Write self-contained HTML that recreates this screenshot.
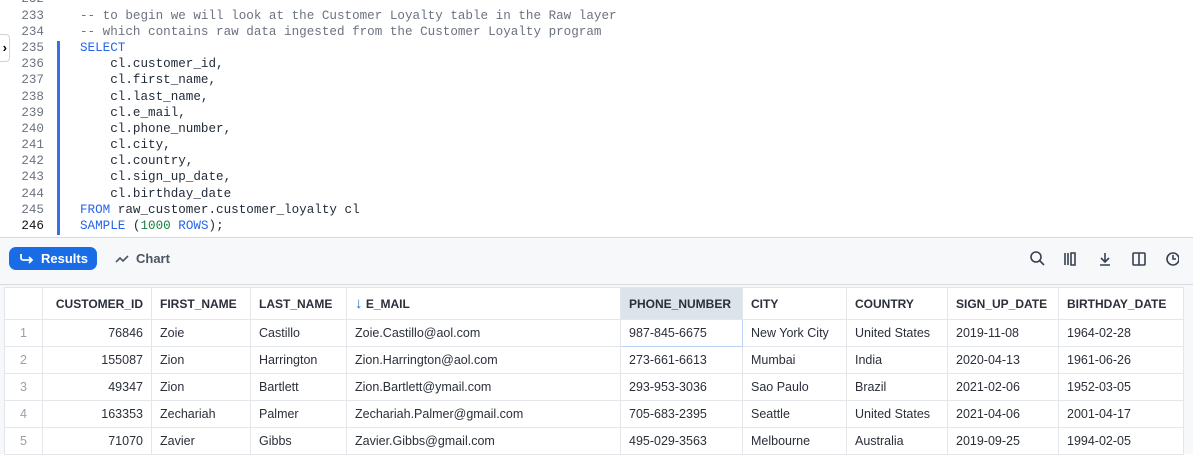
<!DOCTYPE html><html><head><style>
*{margin:0;padding:0;box-sizing:border-box}
body{width:1193px;height:454px;overflow:hidden;background:#fff;font-family:"Liberation Sans",sans-serif;position:relative}
.code{position:absolute;left:0;top:0;width:1193px;height:238px;background:#fff;border-bottom:1px solid #d5d9e0}
.ln{position:absolute;left:0;width:44px;text-align:right;font:12.6px "Liberation Mono",monospace;color:#6b7280}
.cl{position:absolute;left:80px;font:12.6px "Liberation Mono",monospace;color:#1f2937;white-space:pre}
.cm{color:#6b7280}.kw{color:#2563eb}.nm{color:#15803d}
.bar{position:absolute;left:57px;top:41px;width:3px;height:194px;background:#3b6fe8}
.tog{position:absolute;left:-6px;top:34px;width:16px;height:28px;border:1px solid #cfd4dc;border-radius:4px;background:#fff;font-size:13px;font-weight:bold;text-align:right;line-height:26px;padding-right:2px}
.tb{position:absolute;left:0;top:238px;width:1193px;height:47px;background:#f7f8fa;border-bottom:1px solid #d5d9e0}
.btn{position:absolute;left:9px;top:9px;width:88px;height:23px;background:#1a6ce6;border-radius:7px;color:#fff;font-size:13px;font-weight:bold;line-height:23px;padding-left:32px}
.chart{position:absolute;left:136px;top:13px;font-size:13px;color:#4b5563;font-weight:bold}
.tbl{position:absolute;left:0;top:285px;width:1193px;height:169px;background:#f7f8fa}
table{position:absolute;left:4px;top:2px;border-collapse:collapse;table-layout:fixed;width:1179px;background:#fff;font-size:12.5px;color:#2a2f3a}
td,th{border:1px solid #e3e6eb;height:27px;padding:0 8px;white-space:nowrap;overflow:hidden;text-align:left;font-weight:normal}
th{height:32px;font-weight:bold;font-size:12px;color:#2a2f3a}
td.n{color:#9aa0aa;text-align:center;padding:0}
td.r{text-align:right}
</style></head><body>
<div class="code">
<div class="ln" style="top:-8px">232</div>
<div class="ln" style="top:9px">233</div><div class="cl cm" style="top:9px">-- to begin we will look at the Customer Loyalty table in the Raw layer</div>
<div class="ln" style="top:25px">234</div><div class="cl cm" style="top:25px">-- which contains raw data ingested from the Customer Loyalty program</div>
<div class="ln" style="top:41px">235</div><div class="cl kw" style="top:41px">SELECT</div>
<div class="ln" style="top:57px">236</div><div class="cl" style="top:57px">    cl.customer_id,</div>
<div class="ln" style="top:73px">237</div><div class="cl" style="top:73px">    cl.first_name,</div>
<div class="ln" style="top:90px">238</div><div class="cl" style="top:90px">    cl.last_name,</div>
<div class="ln" style="top:106px">239</div><div class="cl" style="top:106px">    cl.e_mail,</div>
<div class="ln" style="top:122px">240</div><div class="cl" style="top:122px">    cl.phone_number,</div>
<div class="ln" style="top:138px">241</div><div class="cl" style="top:138px">    cl.city,</div>
<div class="ln" style="top:154px">242</div><div class="cl" style="top:154px">    cl.country,</div>
<div class="ln" style="top:170px">243</div><div class="cl" style="top:170px">    cl.sign_up_date,</div>
<div class="ln" style="top:187px">244</div><div class="cl" style="top:187px">    cl.birthday_date</div>
<div class="ln" style="top:203px">245</div><div class="cl" style="top:203px"><span class="kw">FROM</span> raw_customer.customer_loyalty cl</div>
<div class="ln" style="top:219px;color:#111">246</div><div class="cl" style="top:219px"><span class="kw">SAMPLE</span> (<span class="nm">1000</span> <span class="kw">ROWS</span>);</div>
<div class="bar"></div>
<div class="tog">›</div>
</div>
<div class="tb">
<div class="btn"><svg style="position:absolute;left:11px;top:6px" width="14" height="12" viewBox="0 0 14 12" fill="none" stroke="#fff" stroke-width="1.8"><path d="M1 1v4a2 2 0 0 0 2 2h9M9 4l3 3-3 3"/></svg>Results</div>
<svg style="position:absolute;left:115px;top:16px" width="14" height="10" viewBox="0 0 14 10" fill="none" stroke="#4b5563" stroke-width="1.6"><path d="M1 8l4-4 3 3 5-5"/></svg>
<div class="chart">Chart</div>
<svg style="position:absolute;left:1029px;top:12px" width="150" height="18" viewBox="0 0 150 18" fill="none" stroke="#374151" stroke-width="1.6">
<circle cx="7" cy="7" r="5"/><path d="M11 11l4 4"/>
<path d="M36 3v12M39 3v12M42 3h4v12h-4z"/>
<path d="M76 3v8M72 8l4 4 4-4M71 15h10"/>
<rect x="104" y="3" width="12" height="12" rx="1"/><path d="M110 3v12"/>
<circle cx="144" cy="9" r="6"/><path d="M144 5v4h3"/>
</svg>
</div>
<div class="tbl">
<table>
<colgroup><col style="width:38px"><col style="width:109px"><col style="width:99px"><col style="width:96px"><col style="width:274px"><col style="width:122px"><col style="width:104px"><col style="width:101px"><col style="width:111px"><col style="width:125px"></colgroup>
<tr><th></th><th style="text-align:right">CUSTOMER_ID</th><th>FIRST_NAME</th><th>LAST_NAME</th><th><span style="color:#1a6ce6;font-size:15px">↓</span> E_MAIL</th><th style="background:#dde3eb">PHONE_NUMBER</th><th>CITY</th><th>COUNTRY</th><th>SIGN_UP_DATE</th><th>BIRTHDAY_DATE</th></tr>
<tr><td class="n">1</td><td class="r">76846</td><td>Zoie</td><td>Castillo</td><td>Zoie.Castillo@aol.com</td><td style="border:1px solid #bcd3f5">987-845-6675</td><td>New York City</td><td>United States</td><td>2019-11-08</td><td>1964-02-28</td></tr>
<tr><td class="n">2</td><td class="r">155087</td><td>Zion</td><td>Harrington</td><td>Zion.Harrington@aol.com</td><td>273-661-6613</td><td>Mumbai</td><td>India</td><td>2020-04-13</td><td>1961-06-26</td></tr>
<tr><td class="n">3</td><td class="r">49347</td><td>Zion</td><td>Bartlett</td><td>Zion.Bartlett@ymail.com</td><td>293-953-3036</td><td>Sao Paulo</td><td>Brazil</td><td>2021-02-06</td><td>1952-03-05</td></tr>
<tr><td class="n">4</td><td class="r">163353</td><td>Zechariah</td><td>Palmer</td><td>Zechariah.Palmer@gmail.com</td><td>705-683-2395</td><td>Seattle</td><td>United States</td><td>2021-04-06</td><td>2001-04-17</td></tr>
<tr><td class="n">5</td><td class="r">71070</td><td>Zavier</td><td>Gibbs</td><td>Zavier.Gibbs@gmail.com</td><td>495-029-3563</td><td>Melbourne</td><td>Australia</td><td>2019-09-25</td><td>1994-02-05</td></tr>
</table>
</div>
</body></html>
